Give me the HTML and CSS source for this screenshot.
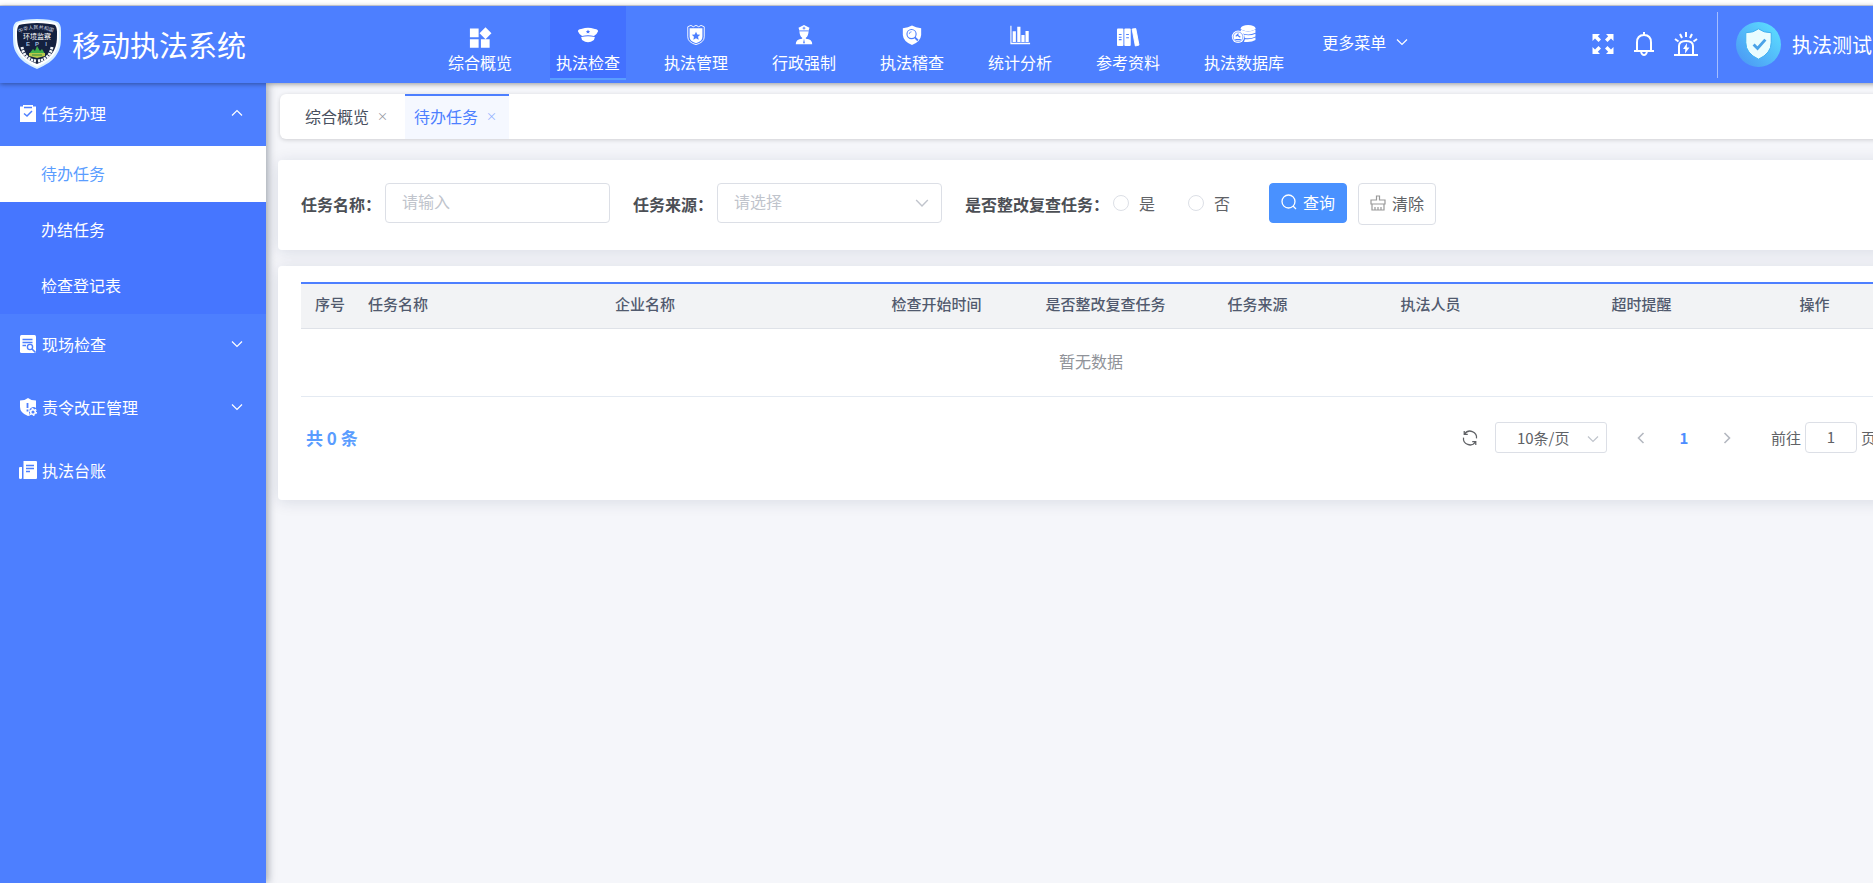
FILE: index.html
```html
<!DOCTYPE html>
<html lang="zh-CN">
<head>
<meta charset="utf-8">
<title>移动执法系统</title>
<link rel="stylesheet" href="styles.css">
</head>
<body>
<svg class="defs" aria-hidden="true">
  <symbol id="down" viewBox="0 0 12 12"><path d="M1 3.500 6 8.500 11 3.500" fill="none" stroke="currentColor" stroke-width="1.200"/></symbol>
</svg>
<div class="shell">
  <div class="strip"></div>
  <header class="topbar">
    <div class="brand">
      <svg class="emblem" viewBox="0 0 48 50">
        <path d="M24 0C15 0 8 1 3 3 0 6 0 9 0 13 0 24 0 29 4 35 8 42 15 46 24 50 33 46 40 42 44 35 48 29 48 24 48 13 48 9 48 6 45 3 40 1 33 0 24 0Z" fill="#d9f0ff"/>
        <path d="M24 2C15 2 9 3 5 4 2 7 2 10 2 14 2 24 3 29 6 34 10 40 16 44 24 48 32 44 38 40 42 34 45 29 46 24 46 14 46 10 46 7 43 4 39 3 33 2 24 2Z" fill="#fff"/>
        <path d="M24 4C16 4 10 5 6 6 4 9 4 11 4 15 4 24 5 28 8 33 12 39 17 42 24 45 31 42 36 39 40 33 43 28 44 24 44 15 44 11 44 9 42 6 38 5 32 4 24 4Z" fill="#14213f"/>
        <path id="arc" d="M6 14Q24 6 42 14" fill="none"/>
        <text class="emblem-arc"><textPath href="#arc">中华人民共和国</textPath></text>
        <text x="24" y="20" class="emblem-name">环境监察</text>
        <text x="15" y="27" class="emblem-epi">E</text><text x="24" y="27" class="emblem-epi">P</text><text x="33" y="27" class="emblem-epi">I</text>
        <path d="M9 28Q11 40 23 42M39 28Q37 40 25 42" fill="none" stroke="#f4f7fa" stroke-width="3" stroke-dasharray="2.4 .8"/>
        <path d="M16 35 20 30 22 32 24 27 27 32 29 30 32 35Z" fill="#3fae49"/>
        <path d="M16 34H32V37L24 39 16 37Z" fill="#b9c94a"/><path d="M19 36H29" stroke="#2d8b3e" stroke-width="1"/>
      </svg>
      <h1 class="brand-name">移动执法系统</h1>
    </div>
    <nav class="menu">
      <a class="menu-item" href="#"><svg class="menu-icon" viewBox="0 0 24 24" fill="#fff"><path d="M1 5H10.500V14.500H1ZM1 16.500H10.500V26H1ZM13 16.500H22.500V26H13ZM18 3.500 24.500 10 18 16.500 11.500 10Z"/></svg><span>综合概览</span></a>
      <a class="menu-item active" href="#"><svg class="menu-icon" viewBox="0 0 24 24"><path d="M1 8Q1 6 4.500 5.500 9 4 12 4 15 4 19.500 5.500 23 6 23 8 22 11 18.500 13 12 11.500 5.500 13 2 11 1 8Z" fill="#fff"/><path d="M4.500 14.300Q12 12.500 19.500 14.300L18.500 17.500Q15 20 12 20 9 20 5.500 17.500Z" fill="#fff"/><path d="m12 6 .7 1.500 1.600.2-1.100 1.100.2 1.600-1.400-.8-1.400.8.2-1.600-1.100-1.100 1.600-.2Z" fill="#4371ff"/></svg><span>执法检查</span></a>
      <a class="menu-item" href="#"><svg class="menu-icon" viewBox="0 0 24 24"><path d="M3 3 6.500 1.500 9 3 12 1.500 15 3 17.500 1.500 21 3V14Q21 20 12 22.500 3 20 3 14Z" fill="none" stroke="#fff"/><path d="M5 4.500H19V14Q19 19 12 21 5 19 5 14Z" fill="#fff"/><path d="m12 8.500 1.400 3 3.200.3-2.400 2.100.7 3.200-2.900-1.600-2.900 1.600.7-3.200-2.400-2.100 3.200-.3Z" fill="#4d7fff"/></svg><span>执法管理</span></a>
      <a class="menu-item" href="#"><svg class="menu-icon" viewBox="0 0 24 24"><path d="M12 1 18 4 17 7Q17 13 14 15V16Q21 16.500 21 22H3Q3 16.500 10 16V15Q7 13 7 7L6 4Z" fill="#fff"/><path d="M7 7.500H17M12 3V6M10.500 4.500H13.500" stroke="#4d7fff"/><path d="m12 16 1 5H11Z" fill="#4d7fff"/></svg><span>行政强制</span></a>
      <a class="menu-item" href="#"><svg class="menu-icon" viewBox="0 0 24 24"><path d="M12 1.500Q16 4 22 4.500V12Q21.500 19 12 23 2.500 19 2 12V4.500Q8 4 12 1.500Z" fill="#fff"/><circle cx="11.500" cy="11" r="5" fill="none" stroke="#4d7fff" stroke-width="1.200"/><path d="m15 14.500 3.500 3.500" stroke="#4d7fff" stroke-width="2"/><path d="M9 11Q9 8.500 11.500 8.500" fill="none" stroke="#4d7fff" stroke-width=".8"/></svg><span>执法稽查</span></a>
      <a class="menu-item" href="#"><svg class="menu-icon" viewBox="0 0 24 24"><path d="M1.500 2H2.700V20.500H23V22H1.500ZM4 8H7.500V19.500H4ZM9 3H12.500V19.500H9ZM13.500 12H17V19.500H13.500ZM18 7.500H21.500V19.500H18Z" fill="#fff"/></svg><span>统计分析</span></a>
      <a class="menu-item" href="#"><svg class="menu-icon" viewBox="0 0 24 24"><rect x="0" y="5" width="7" height="19" rx="1" fill="#fff"/><rect x="8" y="5" width="7" height="19" rx="1" fill="#fff"/><path d="M16.500 5.500 20.500 5 24 23 20 24Z" fill="#fff" stroke="#fff" stroke-linejoin="round"/><path d="M2 11.500H5M2 14.500H5M10 11.500H13M10 15H13M2 17H5" stroke="#4d7fff" stroke-width="1.200"/></svg><span>参考资料</span></a>
      <a class="menu-item" href="#"><svg class="menu-icon menu-icon-wide" viewBox="0 0 28 24" fill="#fff"><ellipse cx="18.500" cy="4.500" rx="8" ry="3.300"/><path d="M10.500 6Q18.500 10.500 26.500 6V9.500Q18.500 13.500 10.500 9.500ZM14 11.700Q21 13 26.500 10.500V13.500Q21 16.500 15 15.200ZM15 16.500Q21 17.500 26.500 14.800V17.500Q22 20.500 14 19.500Z"/><circle cx="7.500" cy="14" r="6.800"/><circle cx="7.500" cy="14" r="5.300" fill="none" stroke="#4d7fff" stroke-width=".7"/><path d="M5 13.500 8 10.500M6.500 12 10 14.500M4.500 17H10.500" stroke="#4d7fff" stroke-width="1.400"/></svg><span>执法数据库</span></a>
    </nav>
    <button class="more" type="button">更多菜单<svg class="chev"><use href="#down"/></svg></button>
    <div class="tools">
      <button class="tool" type="button" aria-label="全屏"><svg viewBox="0 0 24 24" fill="#fff"><path d="M1.500 2H9L6.800 4.200 10 7.500 7.500 10 4 6.600 1.500 9ZM22.500 2H15L17.200 4.200 14 7.500 16.500 10 20 6.600 22.500 9ZM1.500 22H9L6.800 19.800 10 16.500 7.500 14 4 17.400 1.500 15ZM22.500 22H15L17.200 19.800 14 16.500 16.500 14 20 17.400 22.500 15Z"/></svg></button>
      <button class="tool" type="button" aria-label="通知"><svg viewBox="0 0 24 24" fill="none" stroke="#fff" stroke-width="2"><path d="M2 19H22M5 19V10.500Q5 3 12 3 19 3 19 10.500V19M12 0V3"/><path d="M9 20Q10 23 12 23 14 23 15 20"/></svg></button>
      <button class="tool tool-alarm" type="button" aria-label="报警"><svg viewBox="0 0 24 24" fill="none" stroke="#fff" stroke-width="2"><path d="M0 23H24M5 23V14Q5 9 12 9 19 9 19 14V23M12 0V5M6 2 8 6M18 2 16 6M1 7 4.500 9.500M23 7 19.500 9.500"/><path d="M13 11 9 17H11.300L11 21.500 15.500 15.500H12.800Z" fill="#fff" stroke="none"/></svg></button>
    </div>
    <div class="user">
      <svg class="avatar" viewBox="0 0 46 46"><defs><linearGradient id="av" x1="1" y1="0" x2="0" y2="1"><stop offset=".1" stop-color="#5bdcff"/><stop offset="1" stop-color="#4a92f3"/></linearGradient></defs><circle cx="23" cy="23" r="23" fill="url(#av)"/><path d="M23 7Q28 11 36 11V21Q36 32 23 38 10 32 10 21V11Q18 11 23 7Z" fill="#e9fdff" stroke="#3fb0f0"/><path d="m18 23 4 4 8-9" fill="none" stroke="#4aa3e8" stroke-width="3"/></svg>
      <span>执法测试</span>
    </div>
  </header>
  <div class="body">
    <aside class="side">
      <button class="group" type="button"><svg class="group-icon" viewBox="0 0 18 18"><path d="M1 2.500H4V1H14V2.500H17V18H1Z" fill="#fff"/><path d="M5 3.500H13M5 9.500 8 12 13 7" fill="none" stroke="#4d7fff" stroke-width="1.500"/></svg><span>任务办理</span><svg class="chev chev-up"><use href="#down"/></svg></button>
      <div class="sub">
        <a class="sub-item current" href="#">待办任务</a>
        <a class="sub-item" href="#">办结任务</a>
        <a class="sub-item" href="#">检查登记表</a>
      </div>
      <button class="group" type="button"><svg class="group-icon" viewBox="0 0 18 18"><rect x="1" width="16" height="18" rx="1.500" fill="#fff"/><path d="M3.500 4.500H13.500M3.500 7.500H13.500M3.500 10.500H7" stroke="#4d7fff" stroke-width="1.400"/><circle cx="11" cy="12" r="2.600" fill="none" stroke="#4d7fff" stroke-width="1.400"/><path d="m13 14 3.500 3.500" stroke="#4d7fff" stroke-width="1.600"/></svg><span>现场检查</span><svg class="chev"><use href="#down"/></svg></button>
      <button class="group" type="button"><svg class="group-icon" viewBox="0 0 18 18"><path d="M9 0Q12 2.500 17 2.500V10Q16 9 14 9 10 10 10 14 10 16 11 17.500L9 18Q1 15 1 9V2.500Q6 2.500 9 0Z" fill="#fff"/><path d="M8.500 5V10M8.500 11.500V13.500" stroke="#4d7fff" stroke-width="1.800"/><circle cx="14" cy="14" r="2.300" fill="none" stroke="#fff" stroke-width="1.500"/><circle cx="14" cy="14" r="3.400" fill="none" stroke="#fff" stroke-width="1.200" stroke-dasharray="1.800 1.760"/></svg><span>责令改正管理</span><svg class="chev"><use href="#down"/></svg></button>
      <button class="group" type="button"><svg class="group-icon" viewBox="0 0 18 18"><path d="M4.500 0H17Q18 0 18 1V17Q18 18 17 18H4.500ZM0 7Q0 6 1 6H3V17Q3 18 1.500 18 0 18 0 17Z" fill="#fff"/><path d="M7 4.500H15M7 7.500H15M7 10.500H11" stroke="#4d7fff" stroke-width="1.300"/></svg><span>执法台账</span></button>
    </aside>
    <main class="main">
      <div class="tabs">
        <div class="tab"><a href="#">综合概览</a><button type="button" class="tab-close" aria-label="关闭综合概览">×</button></div>
        <div class="tab tab-active"><a href="#">待办任务</a><button type="button" class="tab-close" aria-label="关闭待办任务">×</button></div>
      </div>
      <form class="card filters">
        <div class="field"><label class="label" for="name">任务名称：</label><input class="box" id="name" type="text" placeholder="请输入"></div>
        <div class="field"><label class="label" for="source">任务来源：</label><span class="picker"><select class="box" id="source"><option>请选择</option></select><svg class="picker-chev"><use href="#down"/></svg></span></div>
        <div class="field"><span class="label" id="recheck">是否整改复查任务：</span>
          <div class="radios" role="radiogroup" aria-labelledby="recheck"><label class="radio"><input type="radio" name="recheck">是</label><label class="radio"><input type="radio" name="recheck">否</label></div></div>
        <div class="actions">
          <button class="btn btn-primary" type="button"><svg class="btn-icon" viewBox="0 0 16 16" fill="none" stroke="#fff" stroke-width="1.300"><circle cx="7.500" cy="7.500" r="6.500"/><path d="m12 12 3 3"/></svg>查询</button>
          <button class="btn" type="button"><svg class="btn-icon" viewBox="0 0 16 16" fill="none" stroke="#999" stroke-width="1.200"><path d="M6.500 5V1H9.500V5H15V9H1V5ZM2 9V15H14V9M5 15V12M8 15V12M11 15V12"/></svg>清除</button>
        </div>
      </form>
      <section class="card list">
        <table class="grid">
          <colgroup><col class="c-no"><col class="c-name"><col class="c-name"><col class="c-time"><col class="c-time"><col class="c-source"><col class="c-staff"><col class="c-staff"><col class="c-source"></colgroup>
          <thead><tr><th>序号</th><th class="left">任务名称</th><th class="left">企业名称</th><th>检查开始时间</th><th>是否整改复查任务</th><th>任务来源</th><th>执法人员</th><th>超时提醒</th><th>操作</th></tr></thead>
          <tbody><tr><td colspan="9">暂无数据</td></tr></tbody>
        </table>
        <div class="pager">
          <strong class="total">共 0 条</strong>
          <button class="icon-btn refresh" type="button" aria-label="刷新"><svg viewBox="0 0 18 18" fill="none" stroke="#606266" stroke-width="1.400"><path d="M3 4.500A7.300 7.300 0 0 1 16.300 9.500M15 13.500A7.300 7.300 0 0 1 1.700 8.500M2.500 1V5H6.500M15.500 17V13H11.500"/></svg></button>
          <span class="picker"><select class="size" aria-label="每页条数"><option>10条/页</option></select><svg class="picker-chev size-chev"><use href="#down"/></svg></span>
          <div class="pages">
            <button class="icon-btn" type="button" aria-label="上一页"><svg viewBox="0 0 12 12" fill="none" stroke="#b4b8c0" stroke-width="1.600"><path d="M8.500 1 3.500 6 8.500 11"/></svg></button>
            <a class="page" href="#">1</a>
            <button class="icon-btn" type="button" aria-label="下一页"><svg viewBox="0 0 12 12" fill="none" stroke="#b4b8c0" stroke-width="1.600"><path d="M3.500 1 8.500 6 3.500 11"/></svg></button>
          </div>
          <label class="jump">前往<input class="jump-box" type="text" value="1">页</label>
        </div>
      </section>
    </main>
  </div>
</div>
</body>
</html>
```
FILE: styles.css
```css
* { box-sizing: border-box; }
body {
  margin: 0;
  overflow: hidden;
  background: #f5f6fa;
  color: #606266;
  font: 16px/24px "Noto Sans CJK SC", sans-serif;
}
a { color: inherit; text-decoration: none; }
button, input, select { font: inherit; color: inherit; margin: 0; }
button { background: none; border: 0; padding: 0; cursor: pointer; }
svg { display: block; flex: none; overflow: visible; }
.defs { position: absolute; width: 0; height: 0; }

/* the workspace is slightly wider than the viewport */
.shell {
  display: flex;
  flex-direction: column;
  width: calc(100% + 30px);
  min-height: 100vh;
}
.strip { height: 6px; background: #fff; border-bottom: 1px solid #d5d9e4; }

.topbar {
  display: flex;
  align-items: center;
  height: 77px;
  background: #4d7fff;
  color: #fff;
  box-shadow: 0 1px 5px rgba(0, 0, 0, .4);
  position: relative;
  z-index: 2;
}
.brand { display: flex; align-items: center; gap: 11px; width: 442px; padding: 0 0 2px 13px; }
.emblem { width: 48px; height: 50px; }
.emblem-arc { font-size: 5px; fill: #d5dbe6; }
.emblem-name { font-size: 7px; fill: #fff; text-anchor: middle; }
.emblem-epi { font: bold 6px "Liberation Sans", sans-serif; fill: #9db9dd; text-anchor: middle; }
.brand-name { margin: 0; font-size: 29px; line-height: 40px; font-weight: 400; }

.menu { display: flex; gap: 32px; align-self: stretch; padding-bottom: 3px; }
.menu-item {
  display: flex;
  flex-direction: column;
  align-items: center;
  gap: 4px;
  padding: 18px 6px 0;
  border-bottom: 2px solid transparent;
}
.menu-item.active { background: #4371ff; border-color: #5a9dff; }
.menu-icon { width: 22px; height: 22px; }
.menu-icon-wide { width: 28px; }
.more { display: flex; align-items: center; gap: 10px; margin-left: 32px; padding-bottom: 6px; }
.chev { width: 12px; height: 12px; }
.chev-up { transform: rotate(180deg); }
.tools { display: flex; gap: 17px; margin-left: auto; padding: 0 18px 2px 0; }
.tool svg { width: 24px; height: 24px; }
.tool-alarm svg { width: 26px; }
.user {
  display: flex;
  align-items: center;
  gap: 11px;
  width: 186px;
  height: 66px;
  padding-left: 18px;
  border-left: 1px solid #a5beff;
  font-size: 20px;
}
.avatar { width: 45px; height: 45px; }

.body { display: flex; flex: 1; }
.side {
  width: 266px;
  flex: none;
  background: #4d7fff;
  color: #fff;
  box-shadow: 2px 0 8px rgba(0, 21, 41, .35);
  z-index: 1;
}
.group { display: flex; align-items: center; gap: 5px; width: 100%; height: 63px; padding: 0 23px 3px 19px; }
.group-icon { width: 18px; height: 18px; }
.group .chev { margin-left: auto; }
.sub { background: #4676ff; }
.sub-item { display: flex; align-items: center; height: 56px; padding: 0 0 3px 41px; }
.sub-item.current { background: #fff; color: #5a9dff; }

.main { flex: 1; min-width: 0; padding: 11px 0 0 12px; }
.tabs {
  display: flex;
  height: 45px;
  margin: 0 0 21px 2px;
  padding-left: 16px;
  background: #fff;
  border-radius: 6px;
  box-shadow: 0 1px 4px rgba(0, 0, 0, .16);
}
.tab { display: flex; align-items: center; gap: 8px; width: 104px; margin-right: 5px; padding: 0 0 4px 9px; border-top: 2px solid transparent; color: #495060; }
.tab-active { background: #f5f8ff; border-color: #4d7fff; color: #4d7fff; }
.tab-close { width: 9px; font-size: 11px; opacity: .6; }

.card {
  margin-bottom: 16px;
  background: #fff;
  border-radius: 4px;
  box-shadow: 0 2px 16px rgba(20, 30, 70, .12);
}
.filters { display: flex; align-items: flex-start; gap: 23px; height: 90px; padding: 23px; }
.field { display: flex; }
.label { padding-top: 9px; color: #4c4f55; font-weight: 700; }
.field .label { margin-right: 4px; }
.box {
  width: 225px;
  height: 40px;
  padding: 0 16px 4px;
  border: 1px solid #dcdfe6;
  border-radius: 4px;
  background: #fff;
  color: #c0c4cc;
}
.box::placeholder { color: #c0c4cc; opacity: 1; }
select { appearance: none; }
.picker { position: relative; display: block; }
.picker-chev { position: absolute; right: 13px; top: 13px; width: 14px; height: 14px; color: #c0c4cc; pointer-events: none; }
.radios { display: flex; gap: 33px; height: 40px; padding-bottom: 1px; }
.radio { display: flex; align-items: center; gap: 10px; }
.radio input { appearance: none; width: 16px; height: 16px; border: 1px solid #dcdfe6; border-radius: 50%; background: #fff; }
.radio input:checked { border: 5px solid #4d7fff; }
.actions { display: flex; align-items: flex-start; gap: 11px; margin-left: 16px; }
.btn {
  display: flex;
  align-items: center;
  justify-content: center;
  gap: 6px;
  width: 78px;
  height: 42px;
  padding-bottom: 3px;
  border: 1px solid #dcdfe6;
  border-radius: 4px;
}
.btn-primary { height: 40px; background: #4991ff; border-color: #4991ff; color: #fff; }
.btn-icon { width: 16px; height: 16px; }

.list { padding: 16px 23px 47px; }
.grid { width: 100%; table-layout: fixed; border-collapse: separate; border-spacing: 0; border-top: 2px solid #4d7fff; }
.c-no { width: 56px; }
.c-name { width: 247px; }
.c-time { width: 169px; }
.c-source { width: 135px; }
.c-staff { width: 211px; }
th { height: 45px; padding: 0 0 4px 2px; background: #f2f3f5; border-bottom: 1px solid #dfe2e8; color: #515a6e; font-size: 15px; font-weight: 500; }
th.left { padding-left: 11px; text-align: left; }
td { height: 68px; padding: 0 0 3px; border-bottom: 1px solid #e4eaf2; text-align: center; color: #909399; }
.pager { display: flex; align-items: center; height: 31px; margin-top: 25px; padding: 0 4px 0 5px; font-size: 15px; }
.total { color: #5a9dff; font-size: 17px; }
.icon-btn svg { width: 12px; height: 12px; }
.refresh { margin: 0 17px 0 auto; }
.refresh svg { width: 16px; height: 16px; }
.size { width: 112px; height: 31px; padding: 0 21px; border: 1px solid #dcdfe6; border-radius: 3px; background: #fff; }
.size-chev { top: 11px; right: 8px; width: 12px; height: 12px; }
.pages { display: flex; align-items: center; justify-content: space-between; width: 98px; margin: 0 38px 0 28px; }
.page { color: #4d8dff; font-weight: 700; }
.jump { display: flex; align-items: center; gap: 4px; }
.jump-box { width: 52px; height: 31px; padding: 0 0 2px; border: 1px solid #dcdfe6; border-radius: 4px; text-align: center; }
```
